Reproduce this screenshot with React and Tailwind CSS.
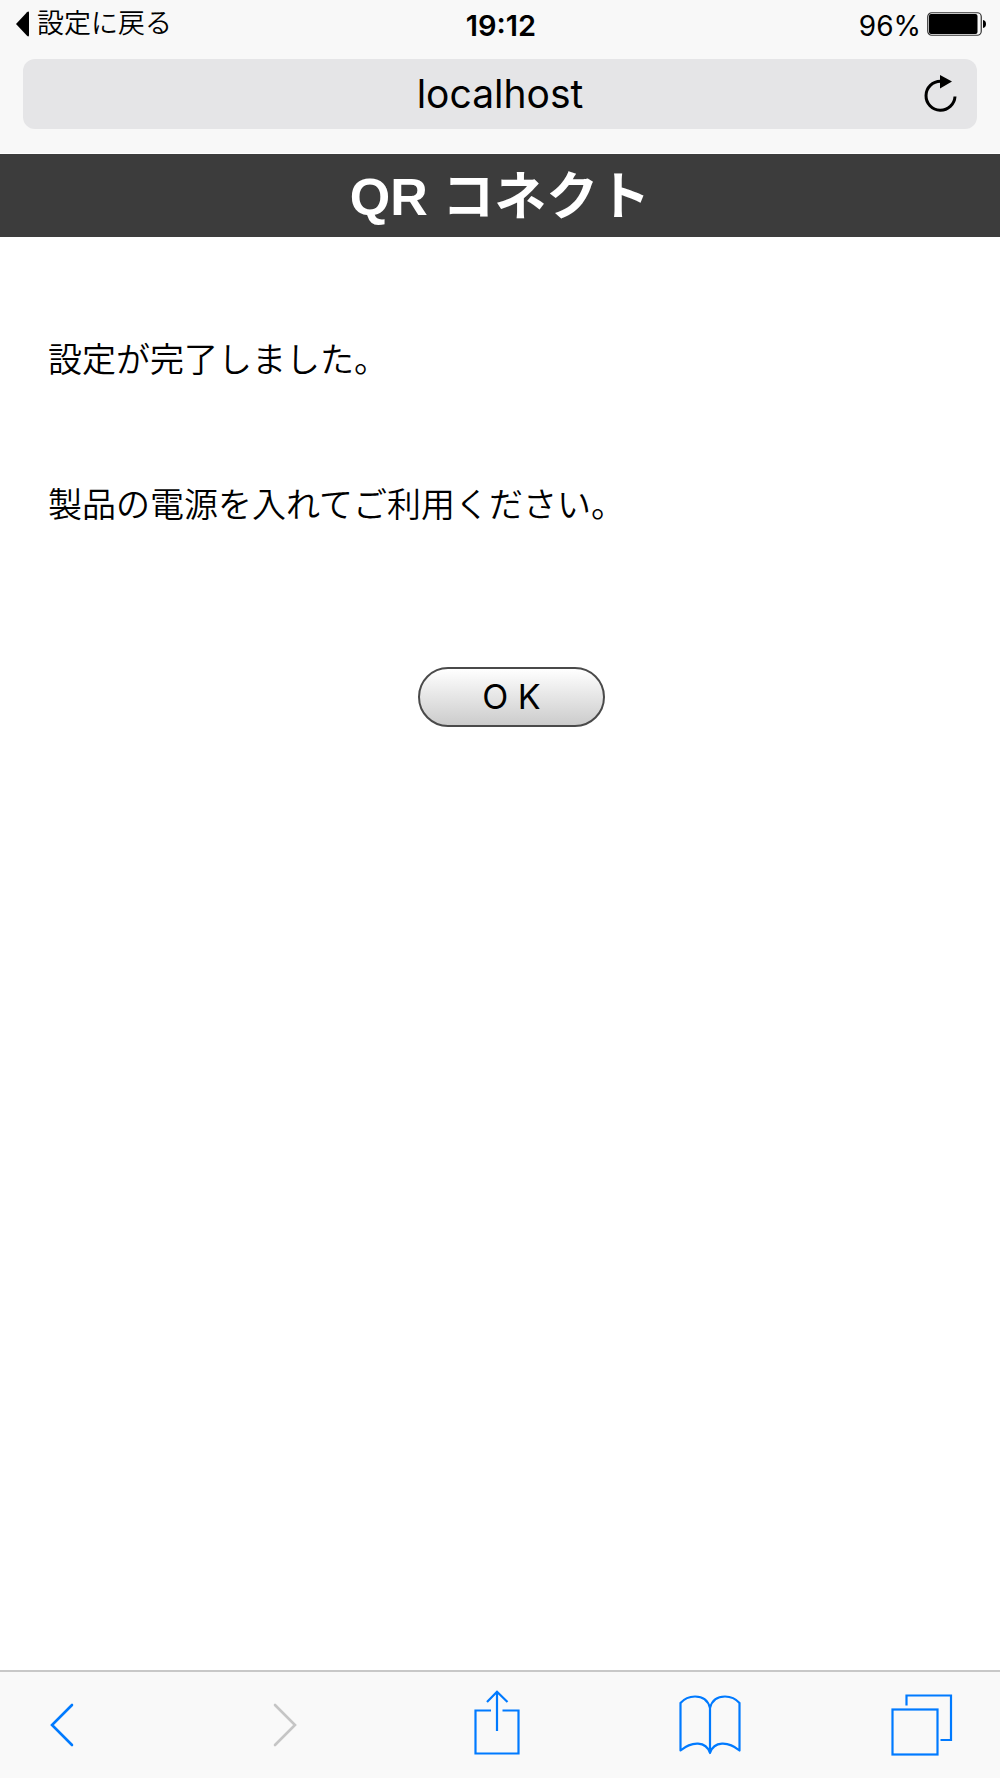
function StatusBar() {
  return (
    <div className="grid h-12 grid-cols-[1fr_auto_1fr] items-center pr-3.5 pl-4">
      <a href="#settings" className="flex items-center gap-2 text-[27px] leading-8 font-[350]">
        <svg width="13" height="26" viewBox="0 0 13 26" aria-hidden="true">
          <path d="M0 13 11 1.2Q13 -.4 13 2V24Q13 26.4 11 24.8Z" fill="#000" />
        </svg>
        設定に戻る
      </a>
      <time className="pt-1 text-[29px] leading-8 font-semibold">19:12</time>
      <div className="flex items-center justify-end gap-1.5 pt-1 text-[28px] leading-8">
        <span>96%</span>
        <svg width="59" height="24" viewBox="0 0 59 24" role="img" aria-label="バッテリー" className="mb-1">
          <rect x=".75" y=".75" width="53.5" height="22.5" rx="4" fill="none" stroke="#333" strokeWidth="1.2" />
          <rect x="2" y="2" width="48.5" height="20" rx="2" fill="#000" />
          <path d="M56 8q3 .6 3 4t-3 4Z" fill="#000" />
        </svg>
      </div>
    </div>
  );
}

function AddressBar() {
  return (
    <div className="px-[23px] pt-[11px] pb-6">
      <div className="grid h-[70px] grid-cols-[1fr_auto_1fr] items-center rounded-xl bg-[#e5e5e7] px-5">
        <span className="col-start-2 text-[39px] leading-[48px]">localhost</span>
        <button type="button" aria-label="再読み込み" className="justify-self-end">
          <svg width="34" height="38" viewBox="0 0 34 38" fill="none" className="block">
            <path d="M17.5 6.2A14.5 14.5 0 1 0 32 21.500" stroke="#000" strokeWidth="3" />
            <path d="M17 0 29 6.500 17 13.500Z" fill="#000" />
          </svg>
        </button>
      </div>
    </div>
  );
}

const toolIcon = "flex h-20 w-16 items-center justify-center";

function Toolbar() {
  return (
    <nav
      aria-label="ツールバー"
      className="flex h-[108px] items-center justify-between border-t-2 border-[#c8c8c8] bg-[#f9f9f9] pr-[46px] pl-5 text-[#007aff]"
    >
      <button type="button" aria-label="戻る" className="flex h-20 w-[84px] items-center justify-center">
        <svg width="24" height="44" viewBox="0 0 24 44" fill="none" stroke="currentColor" strokeWidth="2.6" strokeLinecap="round">
          <path d="M22 2 2 22l20 20" />
        </svg>
      </button>
      <button type="button" aria-label="進む" disabled className={toolIcon + " text-[#c5c5c5]"}>
        <svg width="24" height="44" viewBox="0 0 24 44" fill="none" stroke="currentColor" strokeWidth="2.6" strokeLinecap="round">
          <path d="M2 2l20 20L2 42" />
        </svg>
      </button>
      <button type="button" aria-label="共有" className={toolIcon + " pb-1"}>
        <svg width="46" height="66" viewBox="0 0 46 66" fill="none" stroke="currentColor" strokeWidth="2.2">
          <path d="M17 20.500H1.500v43h43v-43H28.500" />
          <path d="M23 41V1.500M13 12 23 1.800 33.500 12" />
        </svg>
      </button>
      <button type="button" aria-label="ブックマーク" className={toolIcon}>
        <svg width="62" height="60" viewBox="0 0 62 60" fill="none" stroke="currentColor" strokeWidth="2.2" strokeLinejoin="round" strokeLinecap="round">
          <path d="M31 13C29 5 23 1.500 16 1.500 10 1.500 5 4 1.500 8V55.500C13 46 27 46 31 58 35 46 49 46 60.500 55.500V8C57 4 52 1.500 46 1.500 39 1.500 33 5 31 13V57" />
        </svg>
      </button>
      <button type="button" aria-label="タブ" className={toolIcon}>
        <svg width="62" height="62" viewBox="0 0 62 62" fill="none" stroke="currentColor" strokeWidth="2.2">
          <rect x="1.500" y="15.500" width="45" height="45" />
          <path d="M15.500 11.500V1.500h44.500v44.500H49.500" />
        </svg>
      </button>
    </nav>
  );
}

export default function App() {
  return (
    <div
      lang="ja"
      className="flex min-h-screen flex-col bg-white font-[Inter,'Noto_Sans_CJK_JP',sans-serif] text-black"
    >
      <header className="bg-[#f8f8f8]">
        <StatusBar />
        <AddressBar />
      </header>
      <h1 className="border-t border-white bg-[#3c3c3c] pt-[3px] text-center font-['Liberation_Sans','Noto_Sans_CJK_JP',sans-serif] text-[52px] leading-[80px] font-bold text-white">
        QR コネクト
      </h1>
      <main className="grow pt-[99px] pl-12">
        <p className="text-[34px] leading-12 font-[350]">設定が完了しました。</p>
        <p className="mt-[97px] text-[34px] leading-12 font-[350]">製品の電源を入れてご利用ください。</p>
        <div className="mt-[138px] flex justify-center pr-[25px]">
          <button
            type="button"
            className="h-[60px] w-[187px] rounded-full border-2 border-[#4a4a4a] bg-linear-to-b from-white to-[#cccccc] text-[34px] leading-12"
          >
            O K
          </button>
        </div>
      </main>
      <Toolbar />
    </div>
  );
}
